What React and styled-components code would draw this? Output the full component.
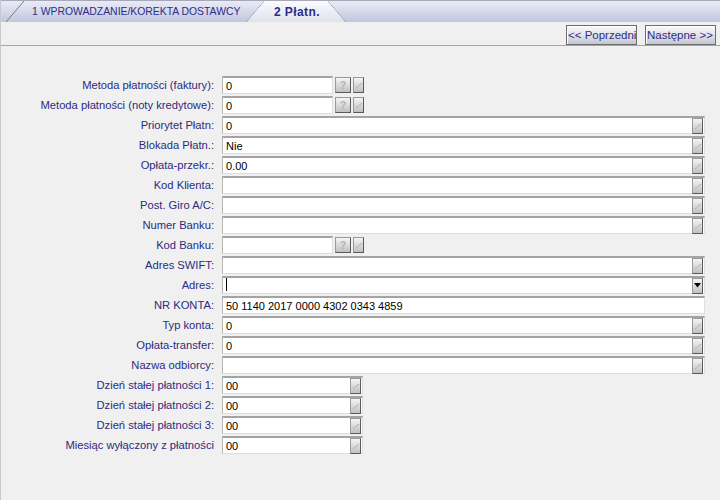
import styled, { createGlobalStyle } from "styled-components"

const Global = createGlobalStyle`
    html, body {
        margin: 0;
        padding: 0;
        background: #f0f0f0;
        font-family: "Liberation Sans", Arial, sans-serif;
        font-size: 11px;
    }
`

const Page = styled.div`
    width: 720px;
    height: 500px;
    background: #f0f0f0;
    border-left: 1px solid #c8c8d0;
    box-sizing: border-box;
    overflow: hidden;
`

const TabBar = styled.div`
    border-top: 1px solid #a8a8b8;
    background: linear-gradient(#e8ebf6, #c3c6dc);
    display: flex;
    padding-left: 5px;
    box-sizing: border-box;
    height: 22px;
`

const Tab = styled.div`
    position: relative;
    height: 21px;
    display: flex;
    align-items: center;
    padding: ${p => (p.$active ? "0 0 0 28px" : "0 0 0 26px")};
    width: ${p => p.$width}px;
    box-sizing: border-box;
    color: #2c2c8a;
    font-size: ${p => (p.$active ? "12px" : "10.4px")};
    font-weight: ${p => (p.$active ? "bold" : "normal")};
    letter-spacing: ${p => (p.$active ? "0.4px" : "0")};
    background: ${p => (p.$active ? "linear-gradient(#fbfbfd, #dfe2ee)" : "transparent")};
    clip-path: ${p => (p.$active ? "polygon(18px 0, calc(100% - 18px) 0, 100% 100%, 0 100%)" : "none")};
`

const Slant = styled.span`
    position: absolute;
    top: 0;
    ${p => (p.$right ? "right: 0;" : "left: 0;")}
    width: 18px;
    height: 21px;
    background: ${p =>
        p.$right
            ? "linear-gradient(to bottom left, transparent calc(50% - 0.7px), #707080 50%, transparent calc(50% + 0.7px))"
            : "linear-gradient(to top left, transparent calc(50% - 0.7px), #707080 50%, transparent calc(50% + 0.7px))"};
`

const Toolbar = styled.div`
    height: 23px;
    border-bottom: 1px solid #a4a4b4;
    display: flex;
    justify-content: flex-end;
    align-items: flex-end;
    gap: 8px;
    padding-right: 4px;
`

const NavButton = styled.button`
    width: 71px;
    height: 20px;
    padding: 0 0 0 1px;
    margin: 0;
    border: 1px solid #6c6c6c;
    background: linear-gradient(#fafafa, #e4e4ea 50%, #c4c6cf);
    color: #2c2c8a;
    font-family: "Liberation Sans", Arial, sans-serif;
    font-size: 11.5px;
    white-space: nowrap;
    overflow: hidden;
    text-align: left;
    box-shadow: inset 1px 1px 0 #ffffff;
`

const Form = styled.div`
    padding-top: 30px;
    display: flex;
    flex-direction: column;
    gap: 2px;
`

const Row = styled.div`
    display: grid;
    grid-template-columns: 213px 1fr;
    column-gap: 8px;
    height: 18px;
    align-items: center;
`

const Label = styled.div`
    text-align: right;
    color: #2b2b80;
    white-space: nowrap;
    font-size: 11.2px;
`

const FieldGroup = styled.div`
    display: flex;
    align-items: center;
    gap: 2px;
`

const Field = styled.div`
    width: ${p => p.$width}px;
    height: 18px;
    box-sizing: border-box;
    background: #ffffff;
    border-top: 2px solid #a4a4a4;
    border-left: 1px solid #b4b4b4;
    border-bottom: 1px solid #dedede;
    border-right: 1px solid #dedede;
    display: flex;
    align-items: center;
    padding-left: 3px;
    padding-right: 1px;
    color: #000;
    font-size: 11px;
`

const Value = styled.span`
    flex: 1;
    white-space: nowrap;
    overflow: hidden;
`

const Caret = styled.span`
    display: inline-block;
    width: 1px;
    height: 13px;
    background: #000;
`

const SmallButton = styled.div`
    width: ${p => p.$width}px;
    height: 16px;
    box-sizing: border-box;
    border: 1px solid #808080;
    border-top-color: #9a9a9a;
    border-left-color: #9a9a9a;
    border-right-color: #5a5a5a;
    border-bottom-color: #5a5a5a;
    background: linear-gradient(#f4f4f4, #d8d8d8 55%, #c0c0c0);
    display: flex;
    align-items: center;
    justify-content: center;
    flex-shrink: 0;
    color: #b4b4b4;
    font-size: 10px;
    font-weight: bold;
`

const Arrow = ({ active }) =>
    active ? (
        <svg width="7" height="5" viewBox="0 0 7 5">
            <path d="M0 0H7L3.5 4.5Z" fill="#000" />
        </svg>
    ) : (
        <svg width="8" height="6" viewBox="0 0 8 6">
            <path d="M1 5.5L3 4.5M3 4.5L7 1" stroke="#a8a8a8" strokeWidth="1" fill="none" />
            <path d="M2 5H6L4 3.5Z" fill="#d0d0d0" />
        </svg>
    )

const DropButton = ({ active }) => (
    <SmallButton $width={11}>
        <Arrow active={active} />
    </SmallButton>
)

const rows = [
    { label: "Metoda płatności (faktury):", value: "0", kind: "lookup" },
    { label: "Metoda płatności (noty kredytowe):", value: "0", kind: "lookup" },
    { label: "Priorytet Płatn:", value: "0", kind: "wide" },
    { label: "Blokada Płatn.:", value: "Nie", kind: "wide" },
    { label: "Opłata-przekr.:", value: "0.00", kind: "wide" },
    { label: "Kod Klienta:", value: "", kind: "wide" },
    { label: "Post. Giro A/C:", value: "", kind: "wide" },
    { label: "Numer Banku:", value: "", kind: "wide" },
    { label: "Kod Banku:", value: "", kind: "lookup" },
    { label: "Adres SWIFT:", value: "", kind: "wide" },
    { label: "Adres:", value: "", kind: "wide", caret: true, active: true },
    { label: "NR KONTA:", value: "50 1140 2017 0000 4302 0343 4859", kind: "plain" },
    { label: "Typ konta:", value: "0", kind: "wide" },
    { label: "Opłata-transfer:", value: "0", kind: "wide" },
    { label: "Nazwa odbiorcy:", value: "", kind: "wide" },
    { label: "Dzień stałej płatności 1:", value: "00", kind: "short" },
    { label: "Dzień stałej płatności 2:", value: "00", kind: "short" },
    { label: "Dzień stałej płatności 3:", value: "00", kind: "short" },
    { label: "Miesiąc wyłączony z płatności", value: "00", kind: "short" },
]

const renderField = row => {
    const content = row.caret ? <Value><Caret /></Value> : <Value>{row.value}</Value>
    if (row.kind === "lookup") {
        return (
            <FieldGroup>
                <Field $width={111}>{content}</Field>
                <SmallButton $width={16}>?</SmallButton>
                <DropButton />
            </FieldGroup>
        )
    }
    if (row.kind === "short") {
        return (
            <Field $width={141}>
                {content}
                <DropButton />
            </Field>
        )
    }
    return (
        <Field $width={483}>
            {content}
            {row.kind === "wide" && <DropButton active={row.active} />}
        </Field>
    )
}

export default function App() {
    return (
        <Page>
            <Global />
            <TabBar>
                <Tab $width={258}>
                    <Slant />
                    1 WPROWADZANIE/KOREKTA DOSTAWCY
                </Tab>
                <Tab $active $width={100} style={{ marginLeft: -18 }}>
                    <Slant />
                    <Slant $right />
                    2 Płatn.
                </Tab>
            </TabBar>
            <Toolbar>
                <NavButton>&lt;&lt; Poprzedni</NavButton>
                <NavButton>Następne &gt;&gt;</NavButton>
            </Toolbar>
            <Form>
                {rows.map(row => (
                    <Row key={row.label}>
                        <Label>{row.label}</Label>
                        {renderField(row)}
                    </Row>
                ))}
            </Form>
        </Page>
    )
}
